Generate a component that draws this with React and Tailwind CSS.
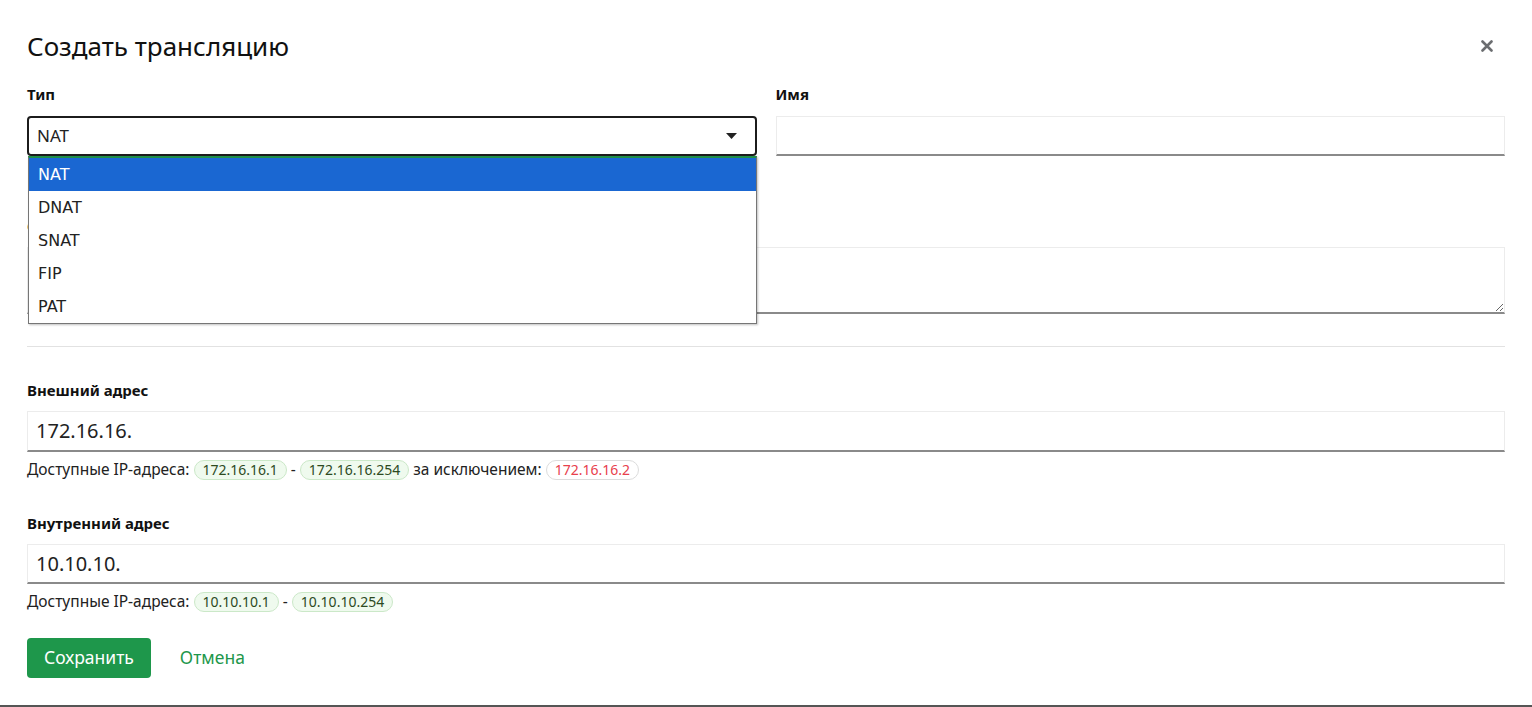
import React from 'react';

const font = { fontFamily: '"Noto Sans", "Open Sans", sans-serif' };
const listFont = { fontFamily: '"DejaVu Sans", "Noto Sans", sans-serif' };

const options = ['NAT', 'DNAT', 'SNAT', 'FIP', 'PAT'];

const Chip = ({ children, danger }) => (
    <span
        className={
            danger
                ? 'inline-flex items-center h-[20px] px-[8px] rounded-full border border-[#dcdcdc] bg-white text-[14px] text-[#e8404c]'
                : 'inline-flex items-center h-[20px] px-[8px] rounded-full border border-[#cbe8c8] bg-[#effaee] text-[14px] text-[#2d4a1f]'
        }
    >
        {children}
    </span>
);

const Label = ({ children }) => (
    <div className="text-[15px] font-bold leading-[20px] text-[#111]">{children}</div>
);

const App = () => {
    return (
        <div className="h-[707px] bg-white border-b-2 border-[#555] px-[27px] pt-[27px]" style={font}>
            {/* Заголовок */}
            <div className="flex items-center justify-between h-[38px]">
                <h1 className="text-[26px] leading-[38px] text-[#111]">Создать трансляцию</h1>
                <svg width="12" height="12" viewBox="0 0 12 12" className="mr-[12px]">
                    <path d="M1.5 1.5 L10.5 10.5 M10.5 1.5 L1.5 10.5" stroke="#6b6d70" strokeWidth="2.6" strokeLinecap="round" />
                </svg>
            </div>

            <div className="grid grid-cols-2 gap-x-[19px] mt-[19px]">
                <div>
                    <Label>Тип</Label>
                    <div className="relative mt-[12px]">
                        <div className="flex items-center justify-between h-[40px] border-2 border-[#1c1c1c] rounded-[4px] pl-[8px] pr-[18px] text-[17px] text-[#222]">
                            <span>NAT</span>
                            <svg width="11" height="6" viewBox="0 0 11 6">
                                <path d="M0 0 H11 L5.5 6 Z" fill="#222" />
                            </svg>
                        </div>
                        {/* Выпадающий список */}
                        <div
                            className="absolute left-[1px] top-[40px] w-[729px] z-10 border-t-2 border-t-[#1e8f4a] bg-white border border-[#767676] shadow-[1px_1px_2px_rgba(0,0,0,0.25)]"
                            style={listFont}
                        >
                            {options.map((o, i) => (
                                <div
                                    key={o}
                                    className={
                                        i === 0
                                            ? 'h-[33px] flex items-center px-[9px] bg-[#1a67d2] text-white text-[16px]'
                                            : 'h-[33px] flex items-center px-[9px] text-[#222] text-[16px]'
                                    }
                                >
                                    {o}
                                </div>
                            ))}
                        </div>
                    </div>
                </div>
                <div>
                    <Label>Имя</Label>
                    <div className="mt-[12px] h-[40px] border border-[#ececec] border-b-2 border-b-[#8a8a8a]" />
                </div>
            </div>

            {/* Описание (перекрыто списком) */}
            <div className="mt-[60px]">
                <Label>Описание</Label>
                <textarea className="block w-full mt-[11px] h-[67px] border border-[#ececec] border-b-2 border-b-[#8a8a8a] outline-none" />
            </div>

            <div className="mt-[32px] border-t border-[#e2e2e2]" />

            {/* Внешний адрес */}
            <div className="mt-[33px]">
                <Label>Внешний адрес</Label>
                <div className="mt-[11px] h-[41px] flex items-center px-[8px] border border-[#ececec] border-b-2 border-b-[#8a8a8a] text-[20px] text-[#222]">
                    172.16.16.
                </div>
                <div className="mt-[6px] flex items-center gap-[4px] text-[15.5px] text-[#222]">
                    <span>Доступные IP-адреса:</span>
                    <Chip>172.16.16.1</Chip>
                    <span>-</span>
                    <Chip>172.16.16.254</Chip>
                    <span>за исключением:</span>
                    <Chip danger>172.16.16.2</Chip>
                </div>
            </div>

            {/* Внутренний адрес */}
            <div className="mt-[32px]">
                <Label>Внутренний адрес</Label>
                <div className="mt-[11px] h-[40px] flex items-center px-[8px] border border-[#ececec] border-b-2 border-b-[#8a8a8a] text-[20px] text-[#222]">
                    10.10.10.
                </div>
                <div className="mt-[6px] flex items-center gap-[4px] text-[15.5px] text-[#222]">
                    <span>Доступные IP-адреса:</span>
                    <Chip>10.10.10.1</Chip>
                    <span>-</span>
                    <Chip>10.10.10.254</Chip>
                </div>
            </div>

            {/* Кнопки */}
            <div className="mt-[24px] flex items-center gap-[29px]">
                <button className="h-[40px] px-[17px] rounded-[4px] bg-[#1e974b] text-white text-[17.5px]">Сохранить</button>
                <button className="text-[17.5px] text-[#1e974b]">Отмена</button>
            </div>
        </div>
    );
};

export default App;
